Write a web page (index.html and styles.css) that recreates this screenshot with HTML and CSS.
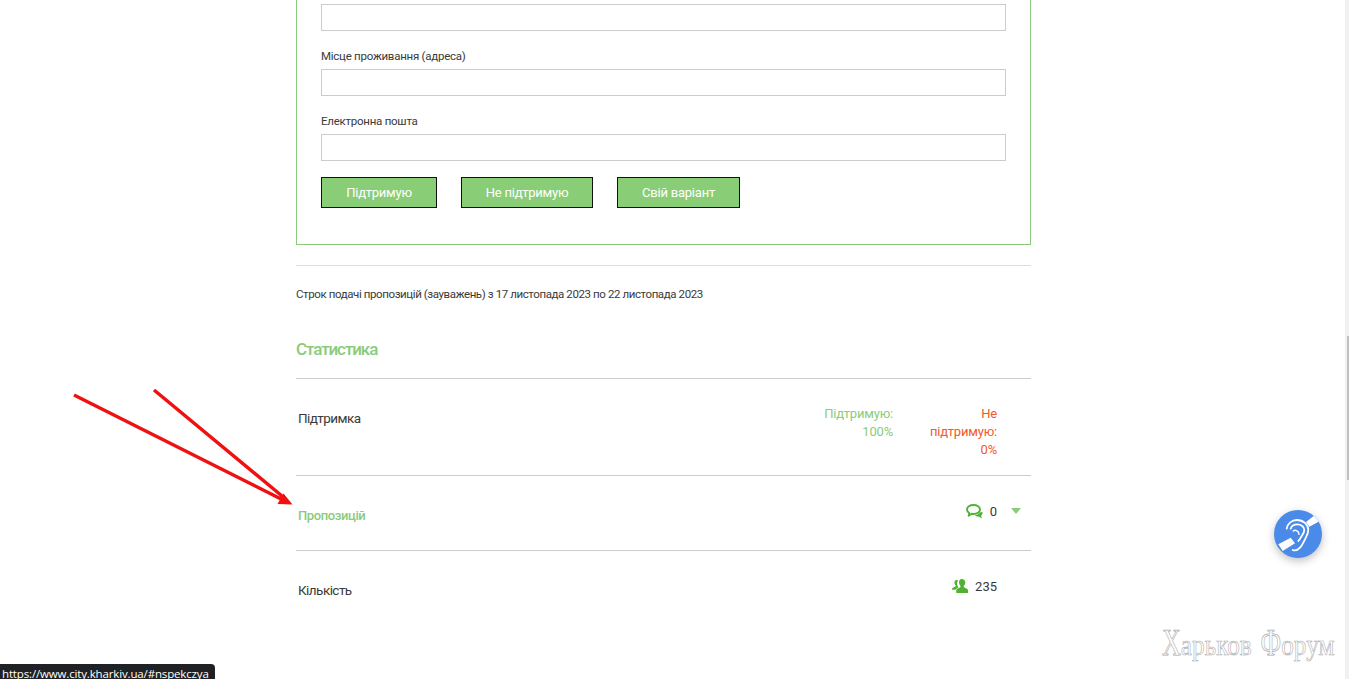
FILE: index.html
```html
<!DOCTYPE html>
<html lang="uk">
<head>
<meta charset="utf-8">
<title>Статистика</title>
<link rel="stylesheet" href="styles.css">
</head>
<body>
<main class="page">
  <form class="vote-form">
    <input class="field first-field" type="text" aria-label="Прізвище">
    <label class="label">Місце проживання (адреса)</label>
    <input class="field" type="text">
    <label class="label">Електронна пошта</label>
    <input class="field" type="text">
    <div class="buttons">
      <button type="button" class="btn btn-a">Підтримую</button>
      <button type="button" class="btn btn-b">Не підтримую</button>
      <button type="button" class="btn btn-c">Свій варіант</button>
    </div>
  </form>
  <hr class="rule-light">
  <p class="term">Строк подачі пропозицій (зауважень) з 17 листопада 2023 по 22 листопада 2023</p>
  <h2 class="stats-title">Статистика</h2>
  <section class="stats">
    <div class="row row-support">
      <div class="row-label">Підтримка</div>
      <div class="support-values">
        <div class="val-yes">Підтримую:<br>100%</div>
        <div class="val-no">Не<br>підтримую:<br>0%</div>
      </div>
    </div>
    <div class="row row-props">
      <a class="row-label link" href="#nspekczya">Пропозицій</a>
      <div class="counter counter-props">
        <svg class="icon" width="17" height="15" viewBox="0 0 17 15" aria-hidden="true">
          <path d="M13.5 8.500 16.500 8c.3 1.500-.2 2.700-1.300 3.500l.6 3-3.300-2.100c-1.400.2-2.800-.1-3.800-1 2.200-.2 4-1.200 5-2.900z" fill="#4fb233"/>
          <path d="M7.500 1C3.900 1 1 3 1 5.500c0 1.400.9 2.700 2.300 3.500l-.6 2.800L5.800 9.800c.5.100 1.100.2 1.700.2C11.100 10 14 8 14 5.500S11.100 1 7.500 1z" fill="#fff" stroke="#4fb233" stroke-width="1.900" stroke-linejoin="round"/>
        </svg>
        <span class="count">0</span>
        <span class="caret"></span>
      </div>
    </div>
    <div class="row row-count">
      <div class="row-label">Кількість</div>
      <div class="counter counter-people">
        <svg class="icon" width="16" height="14" viewBox="0 0 16 14" aria-hidden="true">
          <path d="M4.600 1C3.200 1 2.300 2.200 2.400 3.800c.1 1.200.5 2.100 1.200 2.700.1.600 0 1-.5 1.300C2 8.300.6 8.600 0 9.800v1h3.400c.5-1 1.500-1.500 2.500-1.900.5-.2.500-.6.300-.9-.8-1.100-1.300-2.500-1.100-4 .1-1 .4-1.900 1-2.600C5.700 1.100 5.200 1 4.600 1z" fill="#4fb233"/>
          <path d="M9.800 0C8 0 6.900 1.500 7 3.400c.1 1.500.7 2.700 1.500 3.500.2.800 0 1.300-.6 1.600C6.600 9.100 4.900 9.500 4.300 10.900V14H16v-3.100c-.6-1.400-2.300-1.800-3.600-2.400-.6-.3-.8-.8-.6-1.600.8-.8 1.400-2 1.500-3.500C13.400 1.500 11.700 0 9.800 0z" fill="#4fb233"/>
        </svg>
        <span class="count">235</span>
      </div>
    </div>
  </section>
</main>

<svg class="arrows" width="300" height="125" viewBox="0 0 300 125" aria-hidden="true">
  <path d="M74 6 284 111.500M154 1 285 109.500" fill="none" stroke="#f01010" stroke-width="3.400"/>
  <path d="M292.500 115.500 277.500 115 283.500 104.500z" fill="#f01010"/>
</svg>

<button type="button" class="hearing" aria-label="Доступність">
  <svg width="48" height="48" viewBox="0 0 48 48" aria-hidden="true">
    <path d="M32 12 35.300 16.700 46 11 41 5zM4.300 34.300 8.700 41 21 33.300 16.700 27.700z" fill="#fff"/>
    <path d="M12.700 18.700C13.500 13.500 18 10 22.700 10c6.500 0 11.600 4.400 11.600 9.800 0 4-1.700 6.500-3.300 9.500-1.500 2.700-2.200 5.500-5 8.400-2 2.200-5 3.200-7.300 2.300" fill="none" stroke="#fff" stroke-width="1.800" stroke-linecap="round"/>
    <path d="M16.700 18.700C17.500 16 20.300 14.300 23.300 14.300c3.900 0 7 2.500 7 5.700 0 3.300-2.300 5-3.600 7.700-.6 1.200-1.100 2.200-2.400 3.300" fill="none" stroke="#fff" stroke-width="1.800" stroke-linecap="round"/>
    <path d="M19.300 21c1.200-1.200 5.400-1 5.700 3.300" fill="none" stroke="#fff" stroke-width="1.500" stroke-linecap="round"/>
  </svg>
</button>

<div class="watermark"><span class="wm-cap">Х</span>арьков <span class="wm-cap">Ф</span>орум</div>
<div class="status-url">https://www.city.kharkiv.ua/#nspekczya</div>
<div class="scrollbar"><div class="scroll-thumb"></div></div>
</body>
</html>
```
FILE: styles.css
```css
* { box-sizing: border-box; }
html, body { margin: 0; height: 679px; overflow: hidden; background: #fff; }
body { font-family: Roboto, "Liberation Sans", sans-serif; color: #3a3a3a; position: relative; }

.page { width: 735px; margin-left: 296px; }

.vote-form {
  margin-top: -20px;
  height: 265px;
  padding: 24px 24px 0;
  border: 1px solid #8cc97c;
  border-top: 0;
  display: flex;
  flex-direction: column;
}
.field {
  display: block;
  width: 100%;
  height: 27px;
  border: 1px solid #ccc;
  background: #fff;
  padding: 0;
  flex: none;
}
.label {
  font-size: 11.5px;
  letter-spacing: -.25px;
  line-height: 16px;
  margin-top: 17px;
  margin-bottom: 5px;
  color: #3a3a3a;
}
.buttons { display: flex; gap: 24px; margin-top: 16px; }
.btn {
  height: 31px;
  background: #89cd76;
  border: 1px solid #111;
  color: #fff;
  font: 13px Roboto, sans-serif;
  letter-spacing: -.22px;
  padding: 0;
}
.btn-a { width: 116px; }
.btn-b { width: 132px; }
.btn-c { width: 123px; }

.rule-light { margin: 20px 0 0; border: 0; border-top: 1px solid #ddd; }
.term { margin: 20px 0 0; font-size: 11.5px; line-height: 16px; color: #3a3a3a; letter-spacing: -.4px; }
.stats-title {
  margin: 35px 0 0;
  font-size: 17px;
  line-height: 24px;
  font-weight: 500;
  letter-spacing: -1.1px;
  color: #8bcb7a;
  height: 36px;
}
.stats { border-top: 1px solid #ccc; margin-top: 5px; }
.row {
  display: flex;
  justify-content: space-between;
  border-bottom: 1px solid #ccc;
  padding-left: 2px;
  font-size: 13.5px;
}
.row:last-child { border-bottom: 0; }
.row-support { height: 97px; padding-top: 30px; }
.row-props { height: 75px; padding-top: 31px; }
.row-count { height: 70px; padding-top: 30px; }
.row-label { line-height: 18px; color: #3a3a3a; letter-spacing: -.55px; }
.link { color: #8bcb7a; text-decoration: none; font-weight: 500; font-size: 13px; letter-spacing: -.4px; }

.support-values { display: flex; margin-top: -4px; padding-right: 34px; font-size: 13px; letter-spacing: -.2px; line-height: 18px; text-align: right; }
.val-yes { color: #8bcb7a; width: 80px; }
.val-no { color: #f1592a; width: 104px; padding-left: 30px; }

.counter { display: flex; align-items: center; height: 18px; font-size: 13px; color: #3a3a3a; }
.counter-props { margin-top: -5px; padding-right: 10px; }
.counter-people { margin-top: -4px; padding-right: 34px; }
.icon { display: block; flex: none; }
.count { margin-left: 7px; }
.caret {
  margin-left: 14px;
  width: 0;
  height: 0;
  border-left: 5px solid transparent;
  border-right: 5px solid transparent;
  border-top: 6px solid #8bcb7a;
}

.arrows { position: absolute; left: 0; top: 389px; }
.hearing {
  position: absolute;
  left: 1274px;
  top: 510px;
  width: 48px;
  height: 48px;
  padding: 0;
  border: 0;
  border-radius: 50%;
  background: #4a8ae8;
  box-shadow: 0 3px 8px rgba(0,0,0,.25);
  overflow: hidden;
}
.hearing svg { display: block; }
.watermark {
  position: absolute;
  left: 1162px;
  top: 626px;
  font-family: "Liberation Serif", serif;
  font-size: 29px;
  line-height: 38px;
  word-spacing: 3px;
  white-space: nowrap;
  color: #fff;
  -webkit-text-stroke: .6px #aaa;
  transform: scaleX(.87);
  transform-origin: left center;
}
.wm-cap {
  display: inline-block;
  font-size: 30px;
  transform: scaleY(1.25);
  transform-origin: center 74%;
}
.status-url {
  position: absolute;
  left: 0;
  top: 664px;
  width: 215px;
  height: 15px;
  padding-left: 2px;
  background: #202124;
  color: #fff;
  font-family: "Open Sans", sans-serif;
  font-size: 11.5px;
  letter-spacing: -.15px;
  line-height: 20px;
  border-top-right-radius: 4px;
  white-space: nowrap;
  overflow: hidden;
}
.scrollbar { position: absolute; left: 1345px; top: 0; width: 4px; height: 679px; background: #f1f1f1; }
.scroll-thumb { margin-top: 336px; margin-left: 2px; width: 2px; height: 144px; background: #c1c1c1; }
```
